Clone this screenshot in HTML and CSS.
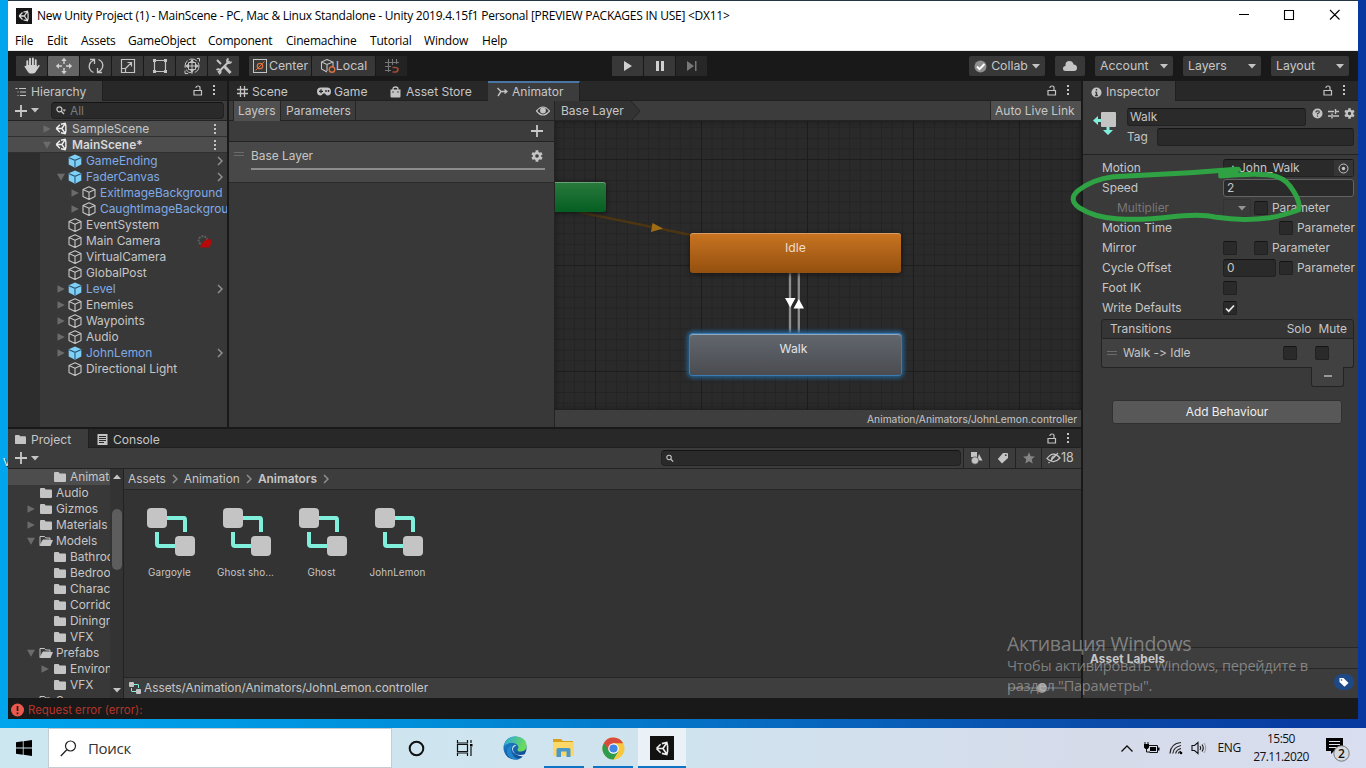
FILE: index.html
```html
<!DOCTYPE html>
<html lang="en">
<head>
<meta charset="utf-8">
<title>New Unity Project (1) - MainScene</title>
<link rel="stylesheet" href="styles.css">
</head>
<body>
<svg class="defs" width="0" height="0">
  <defs>
    <linearGradient id="edgeTop" x1="0" y1="0" x2="1" y2="0.4"><stop offset="0" stop-color="#2aa6e0"/><stop offset="1" stop-color="#6bdc5a"/></linearGradient>
    <linearGradient id="edgeLow" x1="0" y1="0" x2="0.6" y2="1"><stop offset="0" stop-color="#1d8fd6"/><stop offset="1" stop-color="#124a93"/></linearGradient>
    <symbol id="unity" viewBox="0 0 16 16"><path d="M1.500 8 6 3.400M1.500 8 6 12.600M1.500 8h7M8.500 8l3.600-5.400M8.500 8l3.600 5.400M13.400 4.500v7M7.300 2.800l5.300-1.200.9 3.600M7.300 13.200l5.300 1.200.9-3.600" fill="none" stroke="currentColor" stroke-width="1.700"/></symbol>
    <symbol id="cube" viewBox="0 0 14 14"><path d="M7 .8 13 3.400v7L7 13.400 1 10.400v-7zM1 3.600l6 2.600 6-2.600M7 6.200v7" fill="none" stroke="#c6c6c6" stroke-width="1.100" stroke-linejoin="round"/></symbol>
    <symbol id="prefab" viewBox="0 0 14 14"><path d="M7 .6 13.300 3.300v7.300L7 13.700.7 10.600V3.300z" fill="#7fd0f5"/><path d="M1 3.800l6 2.500 6-2.500M7 6.300v7.200" fill="none" stroke="#27587a" stroke-width="1.100"/></symbol>
    <symbol id="folder" viewBox="0 0 14 12"><path d="M1 2q0-1 1-1h3.500l1.200 1.500H12q1 0 1 1V10q0 1-1 1H2q-1 0-1-1z" fill="#c4c4c4"/></symbol>
    <symbol id="folderopen" viewBox="0 0 14 12"><path d="M1 10.500V1.500h4.500L6.700 3H11v2H4z" fill="none" stroke="#c4c4c4"/><path d="M1 11 4 5h10l-2.500 6z" fill="#c4c4c4"/></symbol>
    <symbol id="tri" viewBox="0 0 8 8"><path d="M.5.300 7.800 4 .5 7.700z" fill="#6b6b6b"/></symbol>
    <symbol id="trid" viewBox="0 0 8 8"><path d="M0 .7h8L4 7.700z" fill="#6b6b6b"/></symbol>
    <symbol id="caret" viewBox="0 0 8 5"><path d="M0 0h8L4 4.500z" fill="#c4c4c4"/></symbol>
    <symbol id="chev" viewBox="0 0 6 10"><path d="M1 1l4 4-4 4" fill="none" stroke="#909090" stroke-width="1.500"/></symbol>
    <symbol id="dots" viewBox="0 0 4 12"><path d="M1 1h2v2H1zM1 5h2v2H1zM1 9h2v2H1z" fill="#c4c4c4"/></symbol>
    <symbol id="lock" viewBox="0 0 10 11"><path d="M1 5.500h7.500V10H1zM3 3V2.500Q3 1 5 1t2 1.500v3" fill="none" stroke="#c4c4c4" stroke-width="1.200"/></symbol>
    <symbol id="plus" viewBox="0 0 12 12"><path d="M6 0v12M0 6h12" stroke="#c8c8c8" stroke-width="1.800"/></symbol>
    <symbol id="mag" viewBox="0 0 10 9"><circle cx="3.400" cy="3.300" r="2.500" fill="none" stroke="#c4c4c4" stroke-width="1.200"/><path d="M5 5l3 3" stroke="#c4c4c4" stroke-width="1.400"/></symbol>
    <symbol id="gear" viewBox="0 0 12 12"><path d="M6 .3v11.400M1.100 3.200l9.800 5.600M1.100 8.800 10.900 3.200" stroke="#c4c4c4" stroke-width="2.800"/><circle cx="6" cy="6" r="3" fill="#3c3c3c" stroke="#c4c4c4" stroke-width="2.400"/></symbol>
    <symbol id="ctrl" viewBox="0 0 48 48"><path d="M20 10h17q1 0 1 2v12M10 24v12q0 2 2 2h16" fill="none" stroke="#80f0dc" stroke-width="4"/><rect width="20" height="20" rx="4" fill="#c4c4c4"/><rect x="28" y="28" width="20" height="20" rx="4" fill="#c4c4c4"/></symbol>
  </defs>
</svg>

<div class="desktop">
<span class="stray">V</span>
<div class="window">
  <header class="titlebar">
    <span class="appicon"><svg width="12" height="12"><use href="#unity"/></svg></span>
    <span class="title">New Unity Project (1) - MainScene - PC, Mac &amp; Linux Standalone - Unity 2019.4.15f1 Personal [PREVIEW PACKAGES IN USE] &lt;DX11&gt;</span>
    <svg class="winbtns" width="104" height="12" viewBox="0 0 104 12"><path d="M0 5.500h10M45.500 1.500h9v9h-9zM91 1l9.500 9.500M100.500 1 91 10.500" fill="none" stroke="#000" stroke-width="1.100"/></svg>
  </header>
  <nav class="menubar">
    <span class="m1">File</span><span class="m2">Edit</span><span class="m3">Assets</span><span class="m4">GameObject</span><span class="m5">Component</span><span class="m6">Cinemachine</span><span class="m7">Tutorial</span><span class="m8">Window</span><span class="m9">Help</span>
  </nav>

  <div class="toolbar">
    <div class="tools">
      <span class="tb"><svg width="18" height="18" viewBox="0 0 18 18"><path d="M4.300 10V4.200M7 9V1.800M9.900 9V1.500M12.700 9.500V3.200" stroke="#d0d0d0" stroke-width="1.900" stroke-linecap="round"/><path d="M3.400 8h10.300v2l2-2.300q1.500.2.800 1.500L13 14.500q-.8 1.900-3 1.900H7.500q-1.500 0-2.500-1.500L1.500 9.700q.2-1.600 1.900-.4z" fill="#d0d0d0"/></svg></span>
      <span class="tb on"><svg width="18" height="18" viewBox="0 0 18 18"><path d="M9 2v5M9 11v5M2 9h5M11 9h5" stroke="#d0d0d0" stroke-width="1.400"/><path d="M9 .8 11.700 4H6.300zM9 17.200 6.300 14h5.400zM.8 9 4 6.300v5.400zM17.200 9 14 11.700V6.300z" fill="#d0d0d0"/></svg></span>
      <span class="tb"><svg width="18" height="18" viewBox="0 0 18 18"><path d="M6.500 15.500Q1 13 2.500 7.500 3.500 4.500 7 3M3 2.500h4.500v4.500M11.500 2.500Q17 5 15.500 10.500 14.500 13.500 11 15M15 15.500h-4.500V11" fill="none" stroke="#c4c4c4" stroke-width="1.300"/></svg></span>
      <span class="tb"><svg width="18" height="18" viewBox="0 0 18 18"><path d="M2.500 2.500h13v13h-13zM2.500 11.500h4v4M6.500 11.500 12 6M8.500 5.500h4v4" fill="none" stroke="#c4c4c4" stroke-width="1.200"/></svg></span>
      <span class="tb"><svg width="18" height="18" viewBox="0 0 18 18"><path d="M4.500 3.500h9M4.500 14.500h9M3.500 4.500v9M14.500 4.500v9" stroke="#c4c4c4" stroke-width="1.200"/><path d="M2 2h3v3H2zM13 2h3v3h-3zM2 13h3v3H2zM13 13h3v3h-3z" fill="#c4c4c4"/></svg></span>
      <span class="tb"><svg width="18" height="18" viewBox="0 0 18 18"><circle cx="9" cy="9" r="7" fill="none" stroke="#c4c4c4" stroke-dasharray="8 2"/><path d="M9 3v12M3 9h12M5.500 5.500h7v7h-7zM14 1.500h2.500v3M2 13.500v3h3" fill="none" stroke="#c4c4c4" stroke-width="1"/><path d="M9 2l2 3H7zM9 16l-2-3h4zM2 9l3-2v4zM16 9l-3 2V7z" fill="#c4c4c4"/></svg></span>
      <span class="tb"><svg width="18" height="18" viewBox="0 0 18 18"><path d="M3 15.500 14.500 4M2 3l4 4" stroke="#c4c4c4" stroke-width="2"/><path d="M9.500 9.500 15.500 16" stroke="#c4c4c4" stroke-width="3"/><path d="M16.500 4.500q-1 2.500-4 1.500Q11 3 13.500 1.500M1.500 13q2-2 4 .5 1 2-1.500 3.500" fill="none" stroke="#c4c4c4" stroke-width="1.600"/></svg></span>
    </div>
    <div class="pivot">
      <span class="tb center"><svg width="16" height="16" viewBox="0 0 16 16"><rect x="1.500" y="1.500" width="13" height="13" fill="none" stroke="#c4c4c4"/><circle cx="8" cy="8" r="2.700" fill="none" stroke="#d8703f" stroke-width="1.300"/><path d="M3.500 12.500 12.500 3.500" stroke="#d8703f"/></svg><span>Center</span></span>
      <span class="tb local"><svg width="16" height="16" viewBox="0 0 16 16"><path d="M7 1.500 13 4v5M7 14 1.500 11V4L7 1.500M1.500 4 7 6.500 13 4M7 6.500V13" fill="none" stroke="#c4c4c4" stroke-width="1.100"/><circle cx="12" cy="11.500" r="2.800" fill="none" stroke="#d8703f" stroke-width="1.400"/></svg><span>Local</span></span>
      <span class="tb snap"><svg width="16" height="16" viewBox="0 0 16 16"><path d="M4.500 1v13M8.500 1v6M12.500 1v5M1 4.500h14M1 8.500h6M1 12.500h6" stroke="#777" stroke-width="1.100"/><path d="M8.500 9.500h3q2.500 0 2.500 2t-2.500 2.500h-3" fill="none" stroke="#9b4c36" stroke-width="1.700"/></svg></span>
    </div>
    <div class="play">
      <span class="tb"><svg width="10" height="10"><path d="M1 0l8 5-8 5z" fill="#d0d0d0"/></svg></span>
      <span class="tb"><svg width="10" height="10"><path d="M1 0h3v10H1zM6 0h3v10H6z" fill="#d0d0d0"/></svg></span>
      <span class="tb dim"><svg width="12" height="10"><path d="M1 0l7 5-7 5zM9 0h1.500v10H9z" fill="#777"/></svg></span>
    </div>
    <div class="right">
      <span class="tb collab"><svg width="13" height="13" viewBox="0 0 13 13"><circle cx="6.500" cy="6.500" r="6" fill="#8f8f8f"/><path d="M3 6.500l2.500 2.700L10.500 4" fill="none" stroke="#fff" stroke-width="1.900"/></svg><span>Collab</span><svg width="8" height="5"><use href="#caret"/></svg></span>
      <span class="tb"><svg width="16" height="12" viewBox="0 0 16 12"><path d="M3.500 11Q1 11 1 8.500T3.500 6Q3 1 7.500 1 11 1 11.500 4.500q3.500 0 3.500 3.500 0 3-3 3z" fill="#c4c4c4"/></svg></span>
      <span class="tb dd"><span>Account</span><svg width="8" height="5"><use href="#caret"/></svg></span>
      <span class="tb dd"><span>Layers</span><svg width="8" height="5"><use href="#caret"/></svg></span>
      <span class="tb dd"><span>Layout</span><svg width="8" height="5"><use href="#caret"/></svg></span>
    </div>
  </div>

  <div class="main">
    <div class="leftcol">
      <div class="upper">
        <section class="panel hierarchy">
          <div class="tabs">
            <span class="tab active th"><svg width="12" height="10" viewBox="0 0 12 10"><path d="M4 1.500h7M5 5h6M5 8.500h6M.5 1.500h2M2.500 5h1M2.500 8.500h1" stroke="#c4c4c4" stroke-width="1.200"/></svg>Hierarchy</span>
            <span class="tabicons"><svg width="10" height="11"><use href="#lock"/></svg><svg width="4" height="12"><use href="#dots"/></svg></span>
          </div>
          <div class="bar hb">
            <svg width="12" height="12"><use href="#plus"/></svg><svg width="8" height="5"><use href="#caret"/></svg>
            <span class="search"><svg width="10" height="9"><use href="#mag"/><path d="M6.500 3.500h3.500L8.200 5.700z" fill="#c4c4c4"/></svg><span>All</span></span>
          </div>
          <div class="tree">
            <div class="row scene"><i class="fold f1"><svg width="8" height="8"><use href="#tri"/></svg></i><svg class="ui" width="13" height="13"><use href="#unity"/></svg><span>SampleScene</span><svg class="end" width="4" height="12"><use href="#dots"/></svg></div>
            <div class="row scene bold"><i class="fold f1"><svg width="8" height="8"><use href="#trid"/></svg></i><svg class="ui" width="13" height="13"><use href="#unity"/></svg><span>MainScene*</span><svg class="end" width="4" height="12"><use href="#dots"/></svg></div>
            <div class="objects">
              <div class="row blue"><i class="fold"></i><svg width="14" height="14"><use href="#prefab"/></svg><span>GameEnding</span><svg class="end" width="6" height="10"><use href="#chev"/></svg></div>
              <div class="row blue"><i class="fold"><svg width="8" height="8"><use href="#trid"/></svg></i><svg width="14" height="14"><use href="#prefab"/></svg><span>FaderCanvas</span><svg class="end" width="6" height="10"><use href="#chev"/></svg></div>
              <div class="row blue sub"><i class="fold"><svg width="8" height="8"><use href="#tri"/></svg></i><svg width="14" height="14"><use href="#cube"/></svg><span>ExitImageBackground</span></div>
              <div class="row blue sub"><i class="fold"><svg width="8" height="8"><use href="#tri"/></svg></i><svg width="14" height="14"><use href="#cube"/></svg><span>CaughtImageBackground</span></div>
              <div class="row"><i class="fold"></i><svg width="14" height="14"><use href="#cube"/></svg><span>EventSystem</span></div>
              <div class="row"><i class="fold"></i><svg width="14" height="14"><use href="#cube"/></svg><span>Main Camera</span><svg class="cine" width="15" height="13" viewBox="0 0 15 13"><circle cx="6" cy="5.500" r="4.300" fill="none" stroke="#5e5e5e" stroke-width="2" stroke-dasharray="2 1"/><path d="M3 12.500 4.500 9 9 4.500q4.500-1.500 5.500 2-.5 3-2.500 6z" fill="#b80808"/></svg></div>
              <div class="row"><i class="fold"></i><svg width="14" height="14"><use href="#cube"/></svg><span>VirtualCamera</span></div>
              <div class="row"><i class="fold"></i><svg width="14" height="14"><use href="#cube"/></svg><span>GlobalPost</span></div>
              <div class="row blue"><i class="fold"><svg width="8" height="8"><use href="#tri"/></svg></i><svg width="14" height="14"><use href="#prefab"/></svg><span>Level</span><svg class="end" width="6" height="10"><use href="#chev"/></svg></div>
              <div class="row"><i class="fold"><svg width="8" height="8"><use href="#tri"/></svg></i><svg width="14" height="14"><use href="#cube"/></svg><span>Enemies</span></div>
              <div class="row"><i class="fold"><svg width="8" height="8"><use href="#tri"/></svg></i><svg width="14" height="14"><use href="#cube"/></svg><span>Waypoints</span></div>
              <div class="row"><i class="fold"><svg width="8" height="8"><use href="#tri"/></svg></i><svg width="14" height="14"><use href="#cube"/></svg><span>Audio</span></div>
              <div class="row blue"><i class="fold"><svg width="8" height="8"><use href="#tri"/></svg></i><svg width="14" height="14"><use href="#prefab"/></svg><span>JohnLemon</span><svg class="end" width="6" height="10"><use href="#chev"/></svg></div>
              <div class="row"><i class="fold"></i><svg width="14" height="14"><use href="#cube"/></svg><span>Directional Light</span></div>
            </div>
          </div>
        </section>

        <section class="panel animator">
          <div class="tabs">
            <span class="tab t-scene"><svg width="11" height="11" viewBox="0 0 11 11"><path d="M3.500 0v11M7.500 0v11M0 3.500h11M0 7.500h11" stroke="#c4c4c4" stroke-width="1.300"/></svg>Scene</span>
            <span class="tab t-game"><svg width="14" height="9" viewBox="0 0 14 9"><path d="M4 .5h6Q14 .5 14 4.500T10.500 8.500Q9 8.500 8 6.500H6Q5 8.500 3.500 8.500 0 8.500 0 4.500T4 .5z" fill="#c4c4c4"/><path d="M2 4.300h4M4 2.300v4" stroke="#282828" stroke-width="1.200"/><circle cx="9" cy="4" r=".9" fill="#282828"/><circle cx="11.500" cy="4" r=".9" fill="#282828"/></svg>Game</span>
            <span class="tab t-store"><svg width="11" height="12" viewBox="0 0 11 12"><path d="M.5 3.500h10v7q0 1-1 1h-8q-1 0-1-1z" fill="#c4c4c4"/><path d="M3 5V3Q3 1 5.500 1T8 3v2" fill="none" stroke="#c4c4c4" stroke-width="1.300"/><path d="M2.500 6h1M7.500 6h1" stroke="#282828" stroke-width="1.300"/></svg>Asset Store</span>
            <span class="tab active focus t-anim"><svg width="11" height="10" viewBox="0 0 11 10"><path d="M.5 1 4 4.500 1 9M4 4.500h6M7.500 2.500 10 4.500 7.500 6.500" fill="none" stroke="#c4c4c4" stroke-width="1.400"/></svg>Animator</span>
            <span class="tabicons"><svg width="10" height="11"><use href="#lock"/></svg><svg width="4" height="12"><use href="#dots"/></svg></span>
          </div>
          <div class="abar">
            <span class="ab-left"><span class="seg sel">Layers</span><span class="seg par">Parameters</span><svg class="eye" width="14" height="10" viewBox="0 0 14 10"><path d="M.5 5Q7-3 13.500 5 7 13 .5 5z" fill="none" stroke="#c4c4c4" stroke-width="1.200"/><circle cx="7" cy="4.500" r="2.900" fill="#c4c4c4"/></svg></span>
            <span class="crumb">Base Layer</span><svg class="crumbtip" width="10" height="20"><path d="M0 0 9 10 0 20z" fill="#333"/><path d="M0 0 9 10 0 20" fill="none" stroke="#242424"/></svg>
            <span class="live">Auto Live Link</span>
          </div>
          <div class="abody">
            <div class="layers">
              <div class="addrow"><svg width="12" height="12"><use href="#plus"/></svg></div>
              <div class="layer"><span class="grip"></span><div class="linfo"><div class="lname"><span>Base Layer</span><svg width="12" height="12"><use href="#gear"/></svg></div><div class="weight"></div></div></div>
            </div>
            <div class="graphcol">
              <div class="graph">
                <svg class="wires" width="526" height="289"><path d="M24 91 136 114" stroke="#4b3512" stroke-width="2.500"/><path d="M97.500 102l10.500 5.500L96 111z" fill="#a16d14"/><path d="M235 152v62M243.800 152v62" stroke="#8e8e8e" stroke-width="2.300"/><path d="M230 177h10.500l-5.200 9.500zM238.500 187.500H249l-5.200-9.500z" fill="#fff"/></svg>
                <div class="node entry"></div>
                <div class="node idle">Idle</div>
                <div class="node walk">Walk</div>
              </div>
              <div class="gfoot">Animation/Animators/JohnLemon.controller</div>
            </div>
          </div>
        </section>
      </div>

      <section class="panel project">
        <div class="tabs">
          <span class="tab active t-proj"><svg width="13" height="11"><use href="#folder"/></svg>Project</span>
          <span class="tab t-cons"><svg width="11" height="11" viewBox="0 0 11 11"><path d="M.5 0h10v11H.5z" fill="#c4c4c4"/><path d="M2 2.500h7M2 4.500h7M2 6.500h7M2 8.500h5" stroke="#2a2a2a"/></svg>Console</span>
          <span class="tabicons"><svg width="10" height="11"><use href="#lock"/></svg><svg width="4" height="12"><use href="#dots"/></svg></span>
        </div>
        <div class="bar pb">
          <svg width="12" height="12"><use href="#plus"/></svg><svg width="8" height="5"><use href="#caret"/></svg>
          <span class="search"><svg width="9" height="9"><use href="#mag"/></svg></span>
          <span class="pbtn"><svg width="13" height="14" viewBox="0 0 13 14"><path d="M1 1h6v5H1zM9 3l3.500 6.500H7z" fill="#c4c4c4"/><circle cx="5" cy="9.500" r="3.700" fill="#c4c4c4" stroke="#3c3c3c" stroke-width=".6"/></svg></span>
          <span class="pbtn"><svg width="12" height="12" viewBox="0 0 12 12"><path d="M6 1h4q1 0 1 1v4L5 11.500.8 7z" fill="#c4c4c4"/><circle cx="8.800" cy="3.200" r=".9" fill="#3c3c3c"/></svg></span>
          <span class="pbtn"><svg width="12" height="12" viewBox="0 0 12 12"><path d="M6 .3l1.700 3.900 4.200.3-3.200 2.800 1 4.200L6 9.200l-3.700 2.300 1-4.200L.1 4.500l4.200-.3z" fill="#858585"/></svg></span>
          <span class="pbtn hid"><svg width="15" height="12" viewBox="0 0 15 12"><path d="M1 6.500Q7.500-2 14 6 7.500 13 1 6.500zM2.500 11 12 1" fill="none" stroke="#c4c4c4" stroke-width="1.200"/><path d="M5 8q-.5-4 4-5z" fill="#c4c4c4"/></svg>18</span>
        </div>
        <div class="pbody">
          <div class="ptree">
            <div class="row p2 hl"><i class="fold"></i><svg width="14" height="12"><use href="#folder"/></svg><span>Animators</span></div>
            <div class="row"><i class="fold"></i><svg width="14" height="12"><use href="#folder"/></svg><span>Audio</span></div>
            <div class="row"><i class="fold"><svg width="8" height="8"><use href="#tri"/></svg></i><svg width="14" height="12"><use href="#folder"/></svg><span>Gizmos</span></div>
            <div class="row"><i class="fold"><svg width="8" height="8"><use href="#tri"/></svg></i><svg width="14" height="12"><use href="#folder"/></svg><span>Materials</span></div>
            <div class="row"><i class="fold"><svg width="8" height="8"><use href="#trid"/></svg></i><svg width="14" height="12"><use href="#folderopen"/></svg><span>Models</span></div>
            <div class="row p2"><i class="fold"></i><svg width="14" height="12"><use href="#folder"/></svg><span>Bathroom</span></div>
            <div class="row p2"><i class="fold"></i><svg width="14" height="12"><use href="#folder"/></svg><span>Bedroom</span></div>
            <div class="row p2"><i class="fold"></i><svg width="14" height="12"><use href="#folder"/></svg><span>Characters</span></div>
            <div class="row p2"><i class="fold"></i><svg width="14" height="12"><use href="#folder"/></svg><span>Corridors</span></div>
            <div class="row p2"><i class="fold"></i><svg width="14" height="12"><use href="#folder"/></svg><span>Diningroom</span></div>
            <div class="row p2"><i class="fold"></i><svg width="14" height="12"><use href="#folder"/></svg><span>VFX</span></div>
            <div class="row"><i class="fold"><svg width="8" height="8"><use href="#trid"/></svg></i><svg width="14" height="12"><use href="#folderopen"/></svg><span>Prefabs</span></div>
            <div class="row p2"><i class="fold"><svg width="8" height="8"><use href="#tri"/></svg></i><svg width="14" height="12"><use href="#folder"/></svg><span>Environment</span></div>
            <div class="row p2"><i class="fold"></i><svg width="14" height="12"><use href="#folder"/></svg><span>VFX</span></div>
            <div class="row"><i class="fold"></i><svg width="14" height="12"><use href="#folderopen"/></svg><span>Scenes</span></div>
          </div>
          <div class="scroll"><svg width="8" height="5"><path d="M0 5h8L4 .5z" fill="#c4c4c4"/></svg><div class="thumb"></div><svg width="8" height="5"><use href="#caret"/></svg></div>
          <div class="pcontent">
            <div class="crumbs"><span>Assets</span><svg width="6" height="10"><use href="#chev"/></svg><span>Animation</span><svg width="6" height="10"><use href="#chev"/></svg><b>Animators</b><svg width="6" height="10"><use href="#chev"/></svg></div>
            <div class="assets">
              <div class="asset"><svg width="48" height="48"><use href="#ctrl"/></svg><span>Gargoyle</span></div>
              <div class="asset"><svg width="48" height="48"><use href="#ctrl"/></svg><span>Ghost sho...</span></div>
              <div class="asset"><svg width="48" height="48"><use href="#ctrl"/></svg><span>Ghost</span></div>
              <div class="asset"><svg width="48" height="48"><use href="#ctrl"/></svg><span>JohnLemon</span></div>
            </div>
            <div class="pfoot"><svg width="12" height="12"><use href="#ctrl"/></svg><span>Assets/Animation/Animators/JohnLemon.controller</span><span class="slider"><i></i></span></div>
          </div>
        </div>
      </section>
    </div>

    <section class="panel inspector">
      <div class="tabs">
        <span class="tab active t-insp"><svg width="11" height="11" viewBox="0 0 11 11"><circle cx="5.500" cy="5.500" r="5" fill="#c4c4c4"/><path d="M5.500 2v1.600M5.500 4.700v4M4.300 5.200h1.200M4 8.500h3" stroke="#3c3c3c" stroke-width="1.400"/></svg>Inspector</span>
        <span class="tabicons"><svg width="10" height="11"><use href="#lock"/></svg><svg width="4" height="12"><use href="#dots"/></svg></span>
      </div>
      <div class="ihead">
        <svg class="stateicon" width="24" height="24" viewBox="0 0 24 24"><path d="M0 9.500 5 5v3h3v3H5v3zM15 24 10 19h3.500v-3h3v3H20z" fill="#80f0dc"/><rect x="8" y="1" width="15" height="15" rx="1" fill="#c4c4c4"/></svg>
        <div class="ifields">
          <div class="iline"><span class="field name">Walk</span>
            <svg width="11" height="11" viewBox="0 0 11 11"><circle cx="5.500" cy="5.500" r="5" fill="#c4c4c4"/><path d="M3.800 4.500q0-1.700 1.800-1.700t1.600 1.500Q7 5.200 5.500 5.500v1M5.500 7.500v1.300" fill="none" stroke="#3c3c3c" stroke-width="1.200"/></svg>
            <svg width="11" height="11" viewBox="0 0 11 11"><path d="M0 3.500h6M8 3.500h3M7.500 1v5M0 8h3M5 8h6M4 5.500v5" stroke="#c4c4c4" stroke-width="1.400"/></svg>
            <svg width="11" height="11" viewBox="0 0 12 12"><use href="#gear"/></svg>
          </div>
          <div class="iline"><span class="taglabel">Tag</span><span class="field tagf"></span></div>
        </div>
      </div>
      <div class="props">
        <div class="prop"><label>Motion</label><span class="field obj"><svg width="10" height="10"><path d="M3 9 6 2l3 7z" fill="#80f0dc"/></svg><span>John_Walk</span><i><svg width="11" height="11"><circle cx="5.500" cy="5.500" r="4.500" fill="none" stroke="#c4c4c4"/><circle cx="5.500" cy="5.500" r="1.700" fill="#c4c4c4"/></svg></i></span></div>
        <div class="prop"><label>Speed</label><span class="field speed">2</span></div>
        <div class="prop"><label class="mult">Multiplier</label><span class="drop"><svg width="8" height="5"><use href="#caret"/></svg></span><span class="cb"></span><span class="ptxt">Parameter</span></div>
        <div class="prop"><label>Motion Time</label><span class="cb far"></span><span class="ptxt">Parameter</span></div>
        <div class="prop"><label>Mirror</label><span class="cb"></span><span class="cb mid"></span><span class="ptxt">Parameter</span></div>
        <div class="prop"><label>Cycle Offset</label><span class="field off">0</span><span class="cb offcb"></span><span class="ptxt">Parameter</span></div>
        <div class="prop"><label>Foot IK</label><span class="cb"></span></div>
        <div class="prop"><label>Write Defaults</label><span class="cb"><svg width="10" height="9"><path d="M1 4.500l2.700 2.700L9 1.500" fill="none" stroke="#e8e8e8" stroke-width="1.700"/></svg></span></div>
      </div>
      <div class="trans">
        <div class="thead"><span>Transitions</span><span class="solo">Solo</span><span>Mute</span></div>
        <div class="titem"><span class="grip"></span><span>Walk -&gt; Idle</span><span class="cb s1"></span><span class="cb s2"></span></div>
        <div class="minus"><i></i></div>
      </div>
      <button class="addb">Add Behaviour</button>
      <div class="labels"><div class="lhead">Asset Labels</div><div class="lbody"><span class="pill"><svg width="10" height="10" viewBox="0 0 10 10"><path d="M.5 1.500V5l5 4.700L9.500 6l-5-5H1z" fill="#fff"/><circle cx="2.500" cy="3" r=".8" fill="#1d4a87"/></svg></span></div></div>
    </section>
  </div>
  <footer class="status"><svg width="13" height="14" viewBox="0 0 13 14"><circle cx="6.500" cy="7" r="6.500" fill="#e9594c"/><path d="M6.500 3v5M6.500 9.500v1.700" stroke="#1a1a1a" stroke-width="1.600"/></svg><span>Request error (error):</span></footer>
</div>

<svg class="mark" width="240" height="70" viewBox="0 0 720 210"><path d="M452 44Q480 40 505 28 M500 28 Q430 34 360 38 T130 50 Q66 58 24 92 Q-6 118 26 142 Q72 172 140 176 Q210 182 300 171 T440 172 Q520 184 600 173 Q640 166 686 150 Q694 124 660 78 Q637 48 590 44 Q540 40 452 48" fill="none" stroke="#2fa243" stroke-width="15" stroke-linecap="round" stroke-linejoin="round"/></svg>

<div class="activate"><div class="a1">Активация Windows</div><div class="a2">Чтобы активировать Windows, перейдите в</div><div class="a2 a3">раздел "Параметры".</div></div>
</div>

<div class="taskbar">
  <span class="start"><svg width="16" height="16" viewBox="0 0 16 16"><path d="M0 2.300 6.800 1.300v6.300H0zM7.600 1.200 16 0v7.600H7.600zM0 8.400h6.800v6.300L0 13.700zM7.600 8.400H16V16l-8.400-1.200z"/></svg></span>
  <span class="tsearch"><svg width="17" height="17" viewBox="0 0 17 17"><circle cx="10.500" cy="6" r="5" fill="none" stroke="#222" stroke-width="1.200"/><path d="M6.800 9.800.8 16" stroke="#222" stroke-width="1.300"/></svg><span>Поиск</span></span>
  <span class="ti"><svg width="17" height="17"><circle cx="8.500" cy="8.500" r="6.800" fill="none" stroke="#111" stroke-width="2"/></svg></span>
  <span class="ti"><svg width="17" height="16" viewBox="0 0 17 16"><path d="M1.500 0v3h10V0M1.500 16v-3h10v3M1.500 4.500h10v7h-10zM15 0v3M15 7v9" fill="none" stroke="#111" stroke-width="1.200"/><path d="M14 4h2.500v2.500H14z"/></svg></span>
  <span class="ti edge"><svg width="24" height="24" viewBox="0 0 24 24"><circle cx="12" cy="12" r="11.500" fill="url(#edgeLow)"/><path d="M1 10Q3 .5 12 .5q11.500.5 11.500 9.500 0 5-5.500 5.500-4 0-3.500-2 2-2.500-.5-5Q11 6 6.500 7 3 8 1 10z" fill="url(#edgeTop)"/><path d="M13.500 9.500q-4 1-3.500 4.500 1 5 7.500 5 3 0 4.500-1-.5 1.500-2 2.700Q9.500 18.500 9 13q0-3 2.500-4z" fill="#d5e9f2"/><path d="M9 9.500q-3 6 2 11 4 3.500 7.500 1.500-4 2.500-9 1Q3 20 4 14q1-3.500 5-4.500z" fill="#1f86cb"/></svg></span>
  <span class="ti run"><svg width="22" height="20" viewBox="0 0 22 20"><path d="M0 1h8l2 2h10v4H0z" fill="#d9a01e"/><path d="M0 4h21v14H0z" fill="#fbd868"/><path d="M3.500 11.500q0-1.500 1.500-1.500h11q1.500 0 1.500 1.500V19h-4v-5.500H8V19H3.500z" fill="#4a98c9"/></svg></span>
  <span class="ti run"><svg width="23" height="23" viewBox="0 0 24 24"><circle cx="12" cy="12" r="11.500" fill="#f8c93e"/><path d="M12 12 2 6.200A11.500 11.500 0 0 0 12 23.500L17 15z" fill="#2f9b4c"/><path d="M2 6.200A11.500 11.500 0 0 1 22 6.500H12L7 14z" fill="#d94b3c"/><circle cx="12" cy="12" r="5.500" fill="#fff"/><circle cx="12" cy="12" r="4.300" fill="#4285e8"/></svg></span>
  <span class="ti run cur"><span class="ubig"><svg width="15" height="15"><use href="#unity"/></svg></span></span>
  <div class="tray">
    <svg width="12" height="7"><path d="M.5 6.500 6 1l5.500 5.500" fill="none" stroke="#111" stroke-width="1.300"/></svg>
    <svg class="bat" width="17" height="13" viewBox="0 0 17 13"><path d="M4.500 3.500h10v7h-8" fill="none" stroke="#111"/><path d="M7 5h6v4H7zM15 5.500h1.500v3H15zM1 2h5v3.500L4.500 7h-2L1 5.500z"/><path d="M2 0v2M5 0v2M3.500 7v3H7" fill="none" stroke="#111"/></svg>
    <svg class="wifi" width="14" height="14" viewBox="0 0 14 14"><path d="M1 12.500Q1.500 2.500 12 1.500M3.800 12.500Q4.500 6 12 4.500M6.600 12.500Q7.500 8.500 12 7.500M9.300 12.500q.5-2 2.700-2.200" fill="none" stroke="#222" stroke-width="1.200"/><circle cx="12" cy="12" r="1.300"/></svg>
    <svg class="vol" width="17" height="14" viewBox="0 0 17 14"><path d="M1 4.500h2.500L7 1.500v11L3.500 9.500H1zM9 5q1.500 2 0 4M11 3.500q2.500 3.500 0 7" fill="none" stroke="#111" stroke-width="1.100"/><path d="M13 2q3.500 5 0 10" fill="none" stroke="#999"/></svg>
    <span class="lang">ENG</span>
    <span class="clock"><span>15:50</span><span>27.11.2020</span></span>
    <span class="notif"><svg width="24" height="26" viewBox="0 0 24 26"><path d="M0 1h17v13H8l-3 3v-3H0z"/><path d="M3 4.500h11M3 7.500h11M3 10.500h8" stroke="#dde3ef"/><circle cx="15.500" cy="16.500" r="7.700" fill="#d6d9df" stroke="#777"/></svg><b>2</b></span>
  </div>
</div>
</body>
</html>
```

FILE: styles.css
```css
* { box-sizing: border-box; }
body { margin: 0; width: 1366px; height: 768px; overflow: hidden; font: 11.9px/16px Inter, "Liberation Sans", sans-serif; font-variant-ligatures: none; font-feature-settings: "calt" 0; color: #c6c6c6; }
svg { display: block; flex: none; }
i { font-style: normal; }
.defs { position: absolute; }
.desktop { position: relative; width: 1366px; height: 728px; padding-left: 8px; background: linear-gradient(90deg, #00a5ee 0, #008fda 30%, #0765bd 60%, #0a49a8 82%, #0638a0 100%); }
.stray { position: absolute; left: 3px; top: 454px; width: 5px; overflow: hidden; color: #fff; text-shadow: 1px 1px 1px #000; font-size: 11px; }
.window { width: 1350px; height: 719px; display: flex; flex-direction: column; background: #191919; border-top: 1px solid #243440; white-space: nowrap; }

/* title and menu */
.titlebar, .menubar { background: #fff; color: #000; font-family: "Open Sans", "Noto Sans", sans-serif; display: flex; align-items: center; }
.titlebar { height: 30px; padding: 0 15px 0 8px; font-size: 12px; }
.appicon { width: 16px; height: 16px; background: #151515; color: #ddd; display: grid; place-items: center; margin-right: 5px; }
.title { letter-spacing: -.25px; }
.winbtns { margin-left: auto; position: relative; top: -1px; }
.menubar { height: 20px; padding-left: 7px; font-size: 12px; letter-spacing: -.2px; border-bottom: 1px solid #e9e9e9; }
.m1 { width: 32px; } .m2 { width: 34px; } .m3 { width: 47px; } .m4 { width: 80px; } .m5 { width: 78px; } .m6 { width: 84px; } .m7 { width: 54px; } .m8 { width: 58px; }

/* main toolbar */
.toolbar { height: 30px; padding: 5px 9px 5px 8px; display: flex; }
.tools, .pivot, .play, .right { display: flex; gap: 1px; }
.tb { height: 20px; width: 31px; background: #383838; border-radius: 1px; display: flex; align-items: center; justify-content: center; font-size: 12.3px; }
.tb.on { background: #656565; }
.pivot { margin-left: 10px; }
.tb.center { width: 62px; gap: 1px; } .tb.local { width: 63px; gap: 0; } .tb.snap { width: 31px; background: #232323; }
.play { margin-left: 205px; }
.tb.dim { background: #272727; }
.right { margin-left: auto; gap: 10px; }
.right .tb { width: 30px; border-radius: 2px; }
.right .collab { width: 76px; gap: 4px; }
.right .dd { width: 78px; justify-content: space-between; padding: 0 5px; }

/* docked panels */
.main { height: 617px; display: flex; gap: 2px; }
.leftcol { width: 1073px; display: flex; flex-direction: column; gap: 2px; }
.upper { height: 346px; display: flex; gap: 2px; }
.panel { background: #383838; display: flex; flex-direction: column; overflow: hidden; }
.hierarchy { width: 219px; }
.animator { width: 852px; }
.project { height: 269px; }
.inspector { width: 275px; background: #3a3a3a; }
.tabs { height: 20px; flex: none; background: #282828; display: flex; border-bottom: 1px solid #202020; font-size: 12.1px; }
.tab { height: 19px; display: flex; align-items: center; padding-top: 2px; padding-left: 8px; gap: 4px; }
.tab.active { background: #3c3c3c; height: 20px; border-right: 1px solid #202020; }
.tab.focus { border-top: 2px solid #4a76a5; padding-top: 0; }
.tab.th { width: 95px; padding-left: 7px; }
.tabicons { margin-left: auto; display: flex; align-items: center; gap: 9px; padding-right: 11px; height: 18px; }
.inspector .tabicons { padding-right: 12px; }
.bar { height: 20px; flex: none; background: #3c3c3c; display: flex; align-items: center; border-bottom: 1px solid #232323; }
.hb { padding-left: 7px; }
.bar svg + svg { margin-left: 4px; }
.search { background: #2a2a2a; border: 1px solid #212121; border-top-color: #141414; border-radius: 4px; display: flex; align-items: center; color: #7b7b7b; }
.hb .search { width: 173px; height: 17px; margin-left: 12px; padding-left: 4px; gap: 4px; }

.row { height: 16px; flex: none; display: flex; align-items: center; }
.row > span { margin-left: 4px; }
.fold { width: 11px; flex: none; display: flex; }
.row .end { margin-left: auto; margin-right: 4px; }
.row.scene { background: #4d4d4d; border-bottom: 1px solid #303030; padding-left: 35px; }
.scene .fold { width: 12px; } .scene .ui { color: #f0f0f0; } .row.scene .end { margin-right: 10px; }
.bold { font-weight: 600; color: #d8d8d8; }
.tree { flex: 1; display: flex; flex-direction: column; }
.objects { flex: 1; border-left: 32px solid #2d2d2d; padding-left: 17px; overflow: hidden; }
.blue { color: #80aae5; }
.sub { padding-left: 14px; }
.cine { margin-left: 36px; }

/* animator */
.t-scene { width: 80px; } .t-game { width: 76px; gap: 3px; } .t-store { width: 103px; gap: 5px; padding-left: 5px; } .t-anim { width: 92px; padding-left: 9px; }
.abar { height: 20px; flex: none; background: #3c3c3c; display: flex; border-bottom: 1px solid #232323; line-height: 20px; font-size: 12px; }
.ab-left { width: 326px; display: flex; align-items: center; padding-left: 4px; border-right: 1px solid #232323; }
.seg { border: 1px solid #252525; border-width: 0 1px; height: 20px; padding: 0 4px; width: 48px; }
.par { width: 75px; border-left: 0; padding-left: 5px; }
.seg.sel { background: #505050; }
.eye { margin-left: auto; margin-right: 4px; }
.crumb { background: #333; width: 76px; padding-left: 6px; }
.live { margin-left: auto; background: #505050; border-left: 1px solid #252525; width: 91px; padding-left: 4px; }
.abody { flex: 1; display: flex; }
.layers { width: 326px; border-right: 1px solid #232323; background: #383838; }
.addrow { height: 21px; border-bottom: 1px solid #232323; display: flex; align-items: center; justify-content: flex-end; padding-right: 11px; background: #3c3c3c; }
.layer { height: 41px; background: #484848; border-bottom: 1px solid #2a2a2a; display: flex; padding: 10px 9px 0 5px; }
.grip { width: 10px; height: 4px; flex: none; border: 1px solid #6b6b6b; border-width: 1px 0; }
.linfo { flex: 1; margin-left: 7px; margin-top: -4px; }
.lname { display: flex; justify-content: space-between; align-items: center; height: 16px; padding-right: 2px; }
.weight { height: 2px; background: #8d8d8d; margin-top: 4px; }
.graphcol { flex: 1; display: flex; flex-direction: column; }
.graph { height: 289px; position: relative; overflow: hidden; background-color: #2a2a2a;
  background-image: linear-gradient(90deg, #1d1d1d 1px, transparent 1px), linear-gradient(#1d1d1d 1px, transparent 1px), linear-gradient(90deg, #242424 1px, transparent 1px), linear-gradient(#242424 1px, transparent 1px);
  background-size: 106px 106px, 106px 106px, 10.6px 10.6px, 10.6px 10.6px; background-position: 40px 38px; box-shadow: inset 0 0 5px #181818; }
.wires, .node { position: absolute; }
.wires { left: 0; top: 0; }
.node { width: 211px; height: 40px; border-radius: 3px; text-align: center; line-height: 29px; box-shadow: 0 1px 5px #151515, inset 0 1px 0 rgba(255,255,255,.3); font-size: 12.2px; }
.entry { left: -160px; top: 61px; height: 30px; background: linear-gradient(#297a3c, #055e22); }
.idle { left: 135px; top: 112px; background: linear-gradient(#c97421, #94500f); color: #f0dcc7; }
.walk { left: 135px; top: 213px; height: 41px; background: linear-gradient(#62666e, #4a4c50); color: #e2e4e8; padding-right: 4px; box-shadow: 0 0 0 1px #3b7cb4, 0 0 4px 3px #24618f, inset 0 1px 0 #8fa6bb; line-height: 30px; }
.gfoot { flex: 1; background: #3e3e3e; text-align: right; padding-right: 4px; font-size: 10.25px; line-height: 19px; }

/* project */
.t-proj { width: 81px; } .project .t-proj { padding-left: 6px; gap: 4px; } .t-cons { padding-left: 8px; gap: 5px; }
.project .tabs { height: 19px; } .project .tab.active { height: 19px; }
.pb { padding-left: 7px; height: 21px; }
.pb .search { margin-left: auto; width: 300px; height: 16px; padding-left: 4px; margin-right: 2px; }
.pbtn { height: 20px; width: 26px; border-left: 1px solid #232323; display: grid; place-items: center; font-size: 12.5px; }
.pbtn.hid { width: 40px; display: flex; align-items: center; padding-left: 4px; }
.pbody { flex: 1; display: flex; min-height: 0; }
.ptree { width: 102px; overflow: hidden; background: #383838; }
.ptree .row { padding-left: 19px; }
.ptree .row > span { margin-left: 3px; }
.ptree .fold { width: 12px; }
.ptree .row.p2 { padding-left: 33px; }
.hl { background: #4d4d4d; }
.scroll { width: 14px; display: flex; flex-direction: column; align-items: center; background: #333; border-right: 1px solid #222; padding: 5px 0; }
.thumb { width: 10px; height: 61px; margin-top: 30px; margin-bottom: auto; border-radius: 5px; background: #5d5d5d; }
.pcontent { flex: 1; display: flex; flex-direction: column; background: #333; }
.crumbs { height: 21px; background: #3d3d3d; border-bottom: 1px solid #262626; display: flex; align-items: center; padding-left: 4px; gap: 6px; }
.crumbs b { font-weight: 600; }
.assets { flex: 1; display: flex; padding: 18px 0 0 7px; }
.asset { width: 76px; display: flex; flex-direction: column; align-items: center; font-size: 9.9px; letter-spacing: .1px; gap: 8px; }
.asset svg { position: relative; left: 2px; }
.asset span { padding-left: 1px; }
.pfoot { height: 21px; background: #3e3e3e; border-top: 1px solid #262626; display: flex; align-items: center; padding-left: 5px; gap: 3px; font-size: 11.85px; }
.slider { margin-left: auto; width: 57px; height: 2px; background: #606060; margin-right: 16px; display: flex; align-items: center; padding-left: 29px; }
.slider i { width: 10px; height: 10px; border-radius: 5px; background: #999; flex: none; }

/* inspector */
.t-insp { width: 93px; }
.ihead { height: 54px; flex: none; display: flex; border-bottom: 1px solid #232323; background: #3c3c3c; }
.stateicon { margin: 10px 0 0 10px; }
.ifields { margin-left: 10px; padding-top: 6px; }
.iline { display: flex; align-items: center; gap: 5px; height: 20px; }
.iline svg { margin-top: -8px; }
.field { height: 18px; background: #2a2a2a; border: 1px solid #212121; border-top-color: #141414; border-radius: 3px; display: flex; align-items: center; padding-left: 3px; }
.name { width: 179px; padding-left: 2px; margin-right: 1px; }
.taglabel { width: 25px; } .tagf { width: 197px; }
.props { padding: 3px 5px 0 19px; }
.prop { height: 20px; display: flex; align-items: center; }
.prop label { width: 121px; flex: none; } .prop .mult { padding-left: 15px; color: #777; }
.prop .field, .drop { flex: none; }
.obj { width: 131px; gap: 2px; }
.obj i { margin-left: auto; width: 19px; height: 16px; background: #353535; display: grid; place-items: center; }
.speed { width: 131px; border-color: #636363; }
.drop { width: 28px; height: 18px; border: 1px solid #303030; display: flex; align-items: center; justify-content: flex-end; padding-right: 4px; opacity: .65; }
.cb { width: 14px; height: 14px; background: #2a2a2a; border: 1px solid #212121; border-top-color: #141414; border-radius: 2px; flex: none; display: grid; place-items: center; }
.drop + .cb { margin-left: 3px; }
.cb.mid { margin-left: 17px; } .cb.far { margin-left: 56px; } .off { width: 53px; } .offcb { margin-left: 3px; }
.ptxt { margin-left: 4px; }
.trans { margin: 1px 0 0 18px; width: 253px; }
.thead { height: 20px; border: 1px solid #232323; background: #353535; border-radius: 3px 3px 0 0; display: flex; align-items: center; padding: 0 6px 0 8px; gap: 7px; }
.solo { margin-left: auto; }
.titem { height: 29px; border: 1px solid #232323; border-top: 0; background: #414141; display: flex; align-items: center; padding-left: 5px; border-radius: 0 0 3px 3px; }
.titem span:nth-child(2) { margin-left: 6px; }
.s1 { margin-left: auto; margin-right: 18px; } .s2 { margin-right: 24px; }
.minus { width: 33px; height: 20px; margin-left: 210px; margin-top: -1px; background: #414141; border: 1px solid #232323; border-top: 0; border-radius: 0 0 3px 3px; display: grid; place-items: center; }
.minus i { width: 8px; height: 2px; background: #999; margin-top: -2px; }
.addb { margin: 13px 0 0 29px; width: 230px; height: 24px; font: inherit; color: #eee; background: #585858; border: 1px solid #303030; border-radius: 3px; padding: 0; }
.labels { margin-top: auto; }
.lhead { height: 22px; border: 1px solid #272727; border-width: 1px 0; background: #3e3e3e; font-weight: 700; font-size: 11.8px; letter-spacing: .1px; line-height: 22px; padding-left: 7px; }
.lbody { height: 29px; background: #3c3c3c; padding: 5px 4px 0; display: flex; justify-content: flex-end; }
.pill { width: 20px; height: 16px; border-radius: 8px; background: #1d4a87; display: grid; place-items: center; }
.status { flex: 1; display: flex; align-items: center; gap: 4px; padding: 2px 0 0 3px; color: #b5352b; font-size: 11.4px; }

/* overlays */
.mark { position: absolute; left: 1070px; top: 160px; overflow: visible; }
.activate { position: absolute; left: 1007px; top: 631px; color: rgba(200,200,200,.52); font-family: "Open Sans", "Noto Sans", sans-serif; white-space: nowrap; }
.a1 { font-size: 19.5px; line-height: 25px; letter-spacing: -.3px; }
.a2 { font-size: 14.5px; line-height: 20px; letter-spacing: -.2px; }

/* taskbar */
.taskbar { height: 40px; display: flex; background: linear-gradient(90deg, #cde7f1, #cfe3ee 50%, #d6dbea 80%, #d9def0); color: #111; font-family: "Open Sans", "Noto Sans", sans-serif; }
.start { width: 48px; display: grid; place-items: center; }
.tsearch { width: 344px; background: #fff; border: 1px solid #c3cdd2; display: flex; align-items: center; padding-left: 11px; gap: 11px; font-size: 15px; letter-spacing: -.3px; color: #333; }
.ti { width: 48px; display: grid; place-items: center; }
.ti.edge { width: 54px; margin-right: 2px; }
.ti.run { width: 40px; margin-right: 9px; border-bottom: 2px solid #0f74c4; padding-top: 2px; }
.ti.run.cur { width: 48px; margin: 0 0 0 -4px; background: #eaf2f7; }
.ubig { width: 24px; height: 24px; background: #111; color: #eee; display: grid; place-items: center; }
.tray { margin-left: auto; display: flex; align-items: center; padding-right: 16px; font-size: 12px; }
.bat { margin-left: 10px; } .wifi { margin-left: 9px; } .vol { margin-left: 8px; } .lang { margin-left: 9px; letter-spacing: -.3px; }
.clock { display: flex; flex-direction: column; align-items: center; width: 58px; margin-left: 11px; line-height: 18px; letter-spacing: -.55px; }
.notif { position: relative; margin-left: 16px; top: 2px; }
.notif b { position: absolute; left: 12px; top: 9px; font-size: 12px; font-weight: 600; line-height: 16px; }
```
